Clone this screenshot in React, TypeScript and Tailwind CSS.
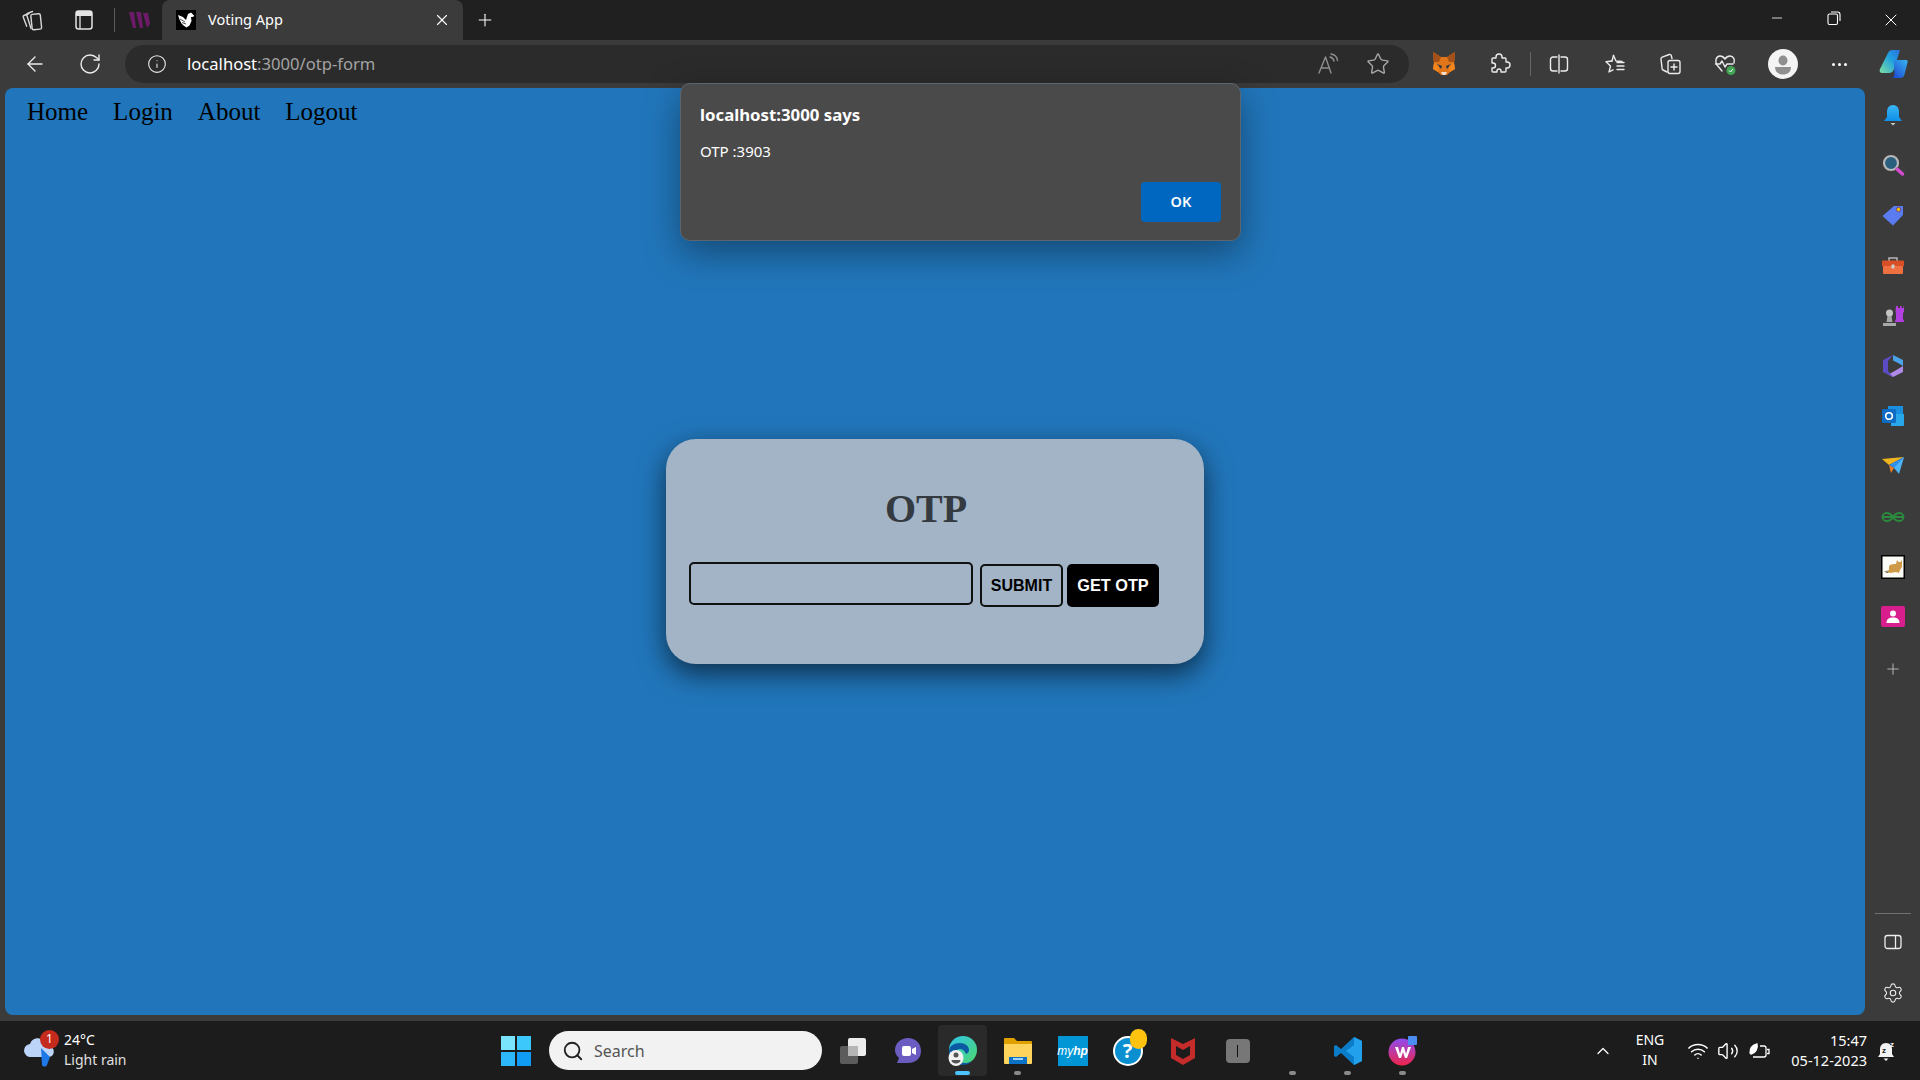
import { useState } from "react"
import { ArrowLeft, RotateCw, Info, Star, X, Plus, Minus, Settings, ChevronUp, Search, Wifi, Volume2 } from "lucide-react"

const UI = "font-['Noto_Sans','Open_Sans',sans-serif]"

const stroke = { fill: "none", stroke: "currentColor", strokeWidth: 1.4, strokeLinecap: "round" as const, strokeLinejoin: "round" as const }

function Collections() {
  return (
    <svg width="24" height="24" viewBox="0 0 24 24" {...stroke} className="text-[#d8d8d8]">
      <path d="M9 5.500 4 7.500c-.7.3-1 1-.7 1.700l3.400 9" />
      <path d="M12.500 3.500 7.500 5.400c-.7.3-1 1-.8 1.600l4.300 13.500" />
      <rect x="11.500" y="6" width="9.500" height="15.500" rx="1.600" transform="rotate(-6 16 14)" />
    </svg>
  )
}

function VerticalTabs() {
  return (
    <svg width="24" height="24" viewBox="0 0 24 24" className="text-[#e4e4e4]">
      <rect x="4" y="3" width="16" height="18" rx="2.500" fill="none" stroke="currentColor" strokeWidth="1.500" />
      <path d="M4 5.500A2.500 2.500 0 0 1 6.500 3h11A2.500 2.500 0 0 1 20 5.500V8H4z" fill="currentColor" />
      <path d="M8 8v13" stroke="currentColor" strokeWidth="1.300" />
    </svg>
  )
}

function WLogo() {
  return (
    <svg width="24" height="24" viewBox="0 0 24 24" fill="#6d1a68">
      <path d="M2 4h5l2 16H6zM9 4h5l2 16h-3zM16 5h5l2 11-3 4z" />
    </svg>
  )
}

function Favicon() {
  return (
    <svg width="20" height="20" viewBox="0 0 20 20" className="shrink-0">
      <rect width="20" height="20" fill="#000" />
      <path d="M2 5 7 7l3 3 2-6 3-1.500L18.500 6l-2 1-1.500 0 .5 4-2 4.500-3 2-3-2-2-2-2-4z" fill="#fff" />
      <path d="M4 9 9 12M6 12.500 10 14" stroke="#000" strokeWidth="0.700" />
    </svg>
  )
}

function ReadAloud() {
  return (
    <svg width="24" height="24" viewBox="0 0 24 24" {...stroke} className="text-[#8e8e8e]">
      <path d="M3 21 9.500 5 15 21M5.500 16h8" />
      <path d="M14 5c2 .5 3.500 2 4 4M15 2c3.500.5 6 3 6.500 6.500" />
    </svg>
  )
}

function Fox() {
  return (
    <svg width="24" height="26" viewBox="0 0 24 26">
      <path d="M1 1 9 6h6l8-5-1 11 1 6-5 3-3 3h-6l-3-3-5-3 1-6z" fill="#e2761b" />
      <path d="M1 1 9 6 7 11 1.500 11zM23 1 15 6l2 5 5.500 0z" fill="#a5521a" />
      <path d="M5 13l5 2-1 3zM19 13l-5 2 1 3z" fill="#233447" />
      <path d="M9 21h6l-1.500 3h-3z" fill="#f2e0cc" />
      <path d="M1 18l5 3 1-6-5-3zM23 18l-5 3-1-6 5-3z" fill="#f6851b" />
    </svg>
  )
}

function PuzzleIcon() {
  return (
    <svg width="24" height="24" viewBox="0 0 24 24" {...stroke} className="text-[#ececec]">
      <path d="M9 6V5a3 3 0 0 1 6 0v1h3a1 1 0 0 1 1 1v3h1a3 3 0 0 1 0 6h-1v3a1 1 0 0 1-1 1h-4v-1a2 2 0 0 0-4 0v1H6a1 1 0 0 1-1-1v-3h1a2.500 2.500 0 0 0 0-5H5V7a1 1 0 0 1 1-1z" />
    </svg>
  )
}

function Split() {
  return (
    <svg width="24" height="24" viewBox="0 0 24 24" {...stroke} className="text-[#ececec]">
      <path d="M10 5H6a2.500 2.500 0 0 0-2.500 2.500v9A2.500 2.500 0 0 0 6 19h4M14 5h4a2.500 2.500 0 0 1 2.500 2.500v9A2.500 2.500 0 0 1 18 19h-4M12 3v18" />
    </svg>
  )
}

function FavStar() {
  return (
    <svg width="24" height="24" viewBox="0 0 24 24" {...stroke} className="text-[#ececec]">
      <path d="M10.500 3.500 13 9l6 .5M9 9 3 9.700l4.500 4.300L6 20l4-2.200" />
      <path d="M10.500 3.500 9 9M14 14h7M14 17.500h7M14 10.500h7" />
    </svg>
  )
}

function AddCollection() {
  return (
    <svg width="24" height="24" viewBox="0 0 24 24" {...stroke} className="text-[#ececec]">
      <path d="M9 20 5 18c-.8-.4-1-1-.9-1.700L3 7c-.1-1 .4-1.600 1.200-1.900l7-2.600c1-.3 1.800.2 2.100 1l.7 3" />
      <rect x="10" y="8.500" width="12" height="13" rx="2" />
      <path d="M16 12v6M13 15h6" />
    </svg>
  )
}

function Heart() {
  return (
    <svg width="24" height="24" viewBox="0 0 24 24">
      <g {...stroke} className="text-[#ececec]">
        <path d="M9 19 4 13C1.500 9.500 3 4 7 4c2.300 0 4 1.500 5 3 1-1.500 2.700-3 5-3 3.500 0 5 3.500 4 7" />
        <path d="M2.500 12H7l2-3 3 6 2-3h6" />
      </g>
      <circle cx="18" cy="18.500" r="4.500" fill="#3fa552" />
      <path d="m16 18.500 1.500 1.500 2.500-3" fill="none" stroke="#fff" strokeWidth="1" />
    </svg>
  )
}

function Profile() {
  return (
    <svg width="30" height="30" viewBox="0 0 30 30">
      <circle cx="15" cy="15" r="15" fill="#f4f4f4" />
      <ellipse cx="15" cy="11.500" rx="4.500" ry="5" fill="#8f8f8f" />
      <path d="M7 18h16c0 5-3.500 7.500-8 7.500S7 23 7 18z" fill="#8f8f8f" />
    </svg>
  )
}

function Copilot() {
  return (
    <svg width="30" height="30" viewBox="0 0 30 30">
      <defs>
        <linearGradient id="cp1" x1="0" y1="1" x2="1" y2="0">
          <stop offset="0" stopColor="#7de0a0" />
          <stop offset="0.6" stopColor="#1e9fe0" />
          <stop offset="1" stopColor="#2c6fe0" />
        </linearGradient>
        <linearGradient id="cp2" x1="0" y1="1" x2="1" y2="0">
          <stop offset="0" stopColor="#1a3fd0" />
          <stop offset="1" stopColor="#38b4f0" />
        </linearGradient>
      </defs>
      <path d="M10 4c1-2 2-3 5-3h7l-6 19c-1 3-3 4-5 4H4c-2 0-3-2-2-4z" fill="url(#cp1)" />
      <path d="M16 11h12c1.500 0 2 1 1.500 2.500l-3 12c-.5 2-2 3.500-4.500 3.500h-9c2 0 3-1.500 3.500-3z" fill="url(#cp2)" />
    </svg>
  )
}

function TitleBar() {
  return (
    <div className={`flex h-10 items-center bg-[#202020] ${UI}`}>
      <div className="flex w-[162px] items-center pl-5">
        <Collections />
        <div className="ml-7">
          <VerticalTabs />
        </div>
        <div className="ml-[18px] h-6 w-px bg-[#5c5c5c]" />
        <div className="ml-3">
          <WLogo />
        </div>
      </div>
      <div className="flex h-10 w-[301px] items-center rounded-t-lg bg-[#3b3b3b] pl-3.5 pr-3">
        <Favicon />
        <span className="mb-px ml-3 text-[14.500px] text-white">Voting App</span>
        <X className="ml-auto size-[18px] text-white" strokeWidth={1.5} />
      </div>
      <Plus className="ml-3 size-5 text-white" strokeWidth={1.3} />
      <div className="ml-auto flex">
        <div className="flex w-[57px] justify-center">
          <Minus className="size-4 text-white" strokeWidth={1.2} />
        </div>
        <div className="flex w-[57px] justify-center">
          <svg width="16" height="16" viewBox="0 0 16 16" fill="none" stroke="#fff" strokeWidth="1.100">
            <rect x="2" y="4" width="9.500" height="10.500" rx="1.500" />
            <path d="M5 2h6.500A2.500 2.500 0 0 1 14 4.500V11" />
          </svg>
        </div>
        <div className="flex w-[58px] justify-center">
          <X className="size-5 text-white" strokeWidth={1.2} />
        </div>
      </div>
    </div>
  )
}

function Toolbar() {
  return (
    <div className={`flex h-12 items-center bg-[#3b3b3b] ${UI}`}>
      <ArrowLeft className="ml-[23px] size-6 text-[#ececec]" strokeWidth={1.4} />
      <RotateCw className="ml-[31px] size-6 text-[#ececec]" strokeWidth={1.4} />
      <div className="ml-[23px] flex h-[38px] w-[1284px] items-center rounded-full bg-[#2b2b2b] pl-[22px] pr-[19px]">
        <Info className="size-5 text-[#ececec]" strokeWidth={1.3} />
        <span className="ml-5 text-[16.600px] text-[#a3a3a3]">
          <span className="text-white">localhost</span>:3000/otp-form
        </span>
        <div className="ml-auto">
          <ReadAloud />
        </div>
        <Star className="ml-[26px] size-6 text-[#a8a8a8]" strokeWidth={1.4} />
      </div>
      <div className="ml-[23px]">
        <Fox />
      </div>
      <div className="ml-[31px]">
        <PuzzleIcon />
      </div>
      <div className="ml-[19px] h-6 w-px bg-[#666]" />
      <div className="ml-4">
        <Split />
      </div>
      <div className="ml-8">
        <FavStar />
      </div>
      <div className="ml-[31px]">
        <AddCollection />
      </div>
      <div className="ml-[31px]">
        <Heart />
      </div>
      <div className="ml-[31px]">
        <Profile />
      </div>
      <div className="ml-[29px] flex w-6 justify-center gap-[3px]">
        <span className="size-[3px] rounded-full bg-white" />
        <span className="size-[3px] rounded-full bg-white" />
        <span className="size-[3px] rounded-full bg-white" />
      </div>
      <div className="ml-[27px]">
        <Copilot />
      </div>
    </div>
  )
}

function AlertDialog() {
  return (
    <div className={`absolute left-[675px] top-[-5px] flex h-[158px] w-[561px] flex-col rounded-[10px] border border-[#5c6670] bg-[#4a4a4a] pl-[19px] pr-[19px] pt-[19px] text-white shadow-[0_12px_36px_rgba(0,0,0,0.38)] ${UI}`}>
      <div className="text-[16.800px] font-bold leading-6">localhost:3000 says</div>
      <div className="mt-3 text-[15px] leading-6">OTP :3903</div>
      <button className="mt-[19px] ml-auto h-10 w-20 rounded bg-[#0067c0] text-[14.500px] font-semibold">OK</button>
    </div>
  )
}

function OtpCard() {
  const [otp, setOtp] = useState("")
  return (
    <div className="h-[225px] w-[538px] rounded-[30px] bg-[#a2b4c6] pl-[23px] pt-[47px] shadow-[0_10px_28px_rgba(0,0,0,0.6)]">
      <div className="w-[474px]">
        <h1 className="text-center font-['Liberation_Serif',serif] text-[40px] font-bold leading-[46px] text-[#343a40]">OTP</h1>
        <div className="mt-[30px] flex items-start font-['Liberation_Sans',sans-serif]">
          <input
            value={otp}
            onChange={(e) => setOtp(e.target.value)}
            className="h-[43px] w-[284px] rounded-[5px] border-2 border-[#111] bg-transparent px-2 outline-none"
          />
          <button className="ml-[7px] mt-[2px] h-[43px] w-[83px] rounded-[5px] border-2 border-[#111] text-[16px] font-bold text-black">SUBMIT</button>
          <button className="ml-1 mt-[2px] h-[43px] w-[92px] rounded-[5px] bg-black text-[16.300px] font-bold text-white">GET OTP</button>
        </div>
      </div>
    </div>
  )
}

function BellIcon() {
  return (
    <svg width="20" height="24" viewBox="0 0 20 24">
      <defs>
        <linearGradient id="bl" x1="0" y1="0" x2="0" y2="1">
          <stop offset="0" stopColor="#3ab6f5" />
          <stop offset="1" stopColor="#0f8fe8" />
        </linearGradient>
      </defs>
      <path d="M10 2c4 0 6 3 6 7v5l3 4H1l3-4V9c0-4 2-7 6-7z" fill="url(#bl)" />
      <path d="M7.500 20h5l-2.500 2.500z" fill="#c9c9c9" />
    </svg>
  )
}

const sideIcons = [
  <BellIcon key="bell" />,
  <svg key="search" width="24" height="24" viewBox="0 0 24 24">
    <circle cx="10" cy="10" r="7" fill="#2b5f80" stroke="#b8b8b8" strokeWidth="2.200" />
    <path d="m16 16 5.500 5" stroke="#d44bd0" strokeWidth="3.500" strokeLinecap="round" />
  </svg>,
  <svg key="tag" width="24" height="24" viewBox="0 0 24 24">
    <path d="M1.500 13 13 3h9v9L12 22.500z" fill="#5a7cf0" />
    <circle cx="17.500" cy="6.500" r="2.200" fill="#f2c200" stroke="#5a2a90" strokeWidth="0.800" />
  </svg>,
  <svg key="toolbox" width="24" height="24" viewBox="0 0 24 24">
    <path d="M8 7V4h8v3" fill="none" stroke="#b5b5b5" strokeWidth="1.500" />
    <rect x="1" y="6.500" width="22" height="6" rx="1" fill="#d84f27" />
    <rect x="2" y="12" width="20" height="8" rx="1" fill="#ee6f3f" />
    <rect x="10.500" y="10.500" width="3" height="4" rx="0.700" fill="#cfcfcf" />
  </svg>,
  <svg key="chess" width="24" height="24" viewBox="0 0 24 24">
    <circle cx="8.500" cy="9" r="3.500" fill="#c4c4c4" />
    <path d="M6.500 12h4l1 6h-6zM2 19h13v3H2z" fill="#a8a8a8" />
    <path d="M15 2h2v2h2V2h1.500v2h2V2h.5v6l-1 1v6l1 2v1H14v-1l1-2V9l-.5-1z" fill="#b23fe0" />
  </svg>,
  <svg key="m365" width="24" height="24" viewBox="0 0 24 24">
    <path d="M12 1 22 6v6l-5-3-5-2.500z" fill="#4aa3e8" />
    <path d="M22 12v6l-10 5-5-2.500 5-2.500 5-3z" fill="#b08ae8" />
    <path d="M2 6l10-5-5 6v10l5 6-10-5z" fill="#5b4cc4" />
  </svg>,
  <svg key="outlook" width="24" height="24" viewBox="0 0 24 24">
    <rect x="7" y="2" width="15" height="8" fill="#1a8fe0" />
    <path d="M10 10h13v11a1 1 0 0 1-1 1H10z" fill="#28a8ea" />
    <rect x="1" y="5" width="14" height="14" rx="1.500" fill="#0f6cc4" />
    <circle cx="8" cy="12" r="3.300" fill="none" stroke="#fff" strokeWidth="1.600" />
  </svg>,
  <svg key="send" width="24" height="24" viewBox="0 0 24 24">
    <path d="M1 5 23 3 8 11z" fill="#f0b41e" />
    <path d="M23 3 8 11l10 6z" fill="#2f8fec" />
    <path d="M8 11l2 8 3-5z" fill="#f07a1e" />
    <path d="M23 3 18 20l-5-6z" fill="#4fb4f5" />
  </svg>,
  <svg key="gfg" width="24" height="24" viewBox="0 0 24 24" fill="none" stroke="#2a8a3e" strokeWidth="1.800">
    <path d="M12 12c-2-3-4-4-6.500-4C3 8 1.500 10 1.500 12S3 16 5.500 16c2.500 0 5-1 6.500-4 1.500 3 4 4 6.500 4s4-2 4-4-1.500-4-4-4C16 8 14 9 12 12zM2 12h20" />
  </svg>,
  <svg key="tomcat" width="24" height="24" viewBox="0 0 24 24">
    <rect x="0.750" y="0.750" width="22.500" height="22.500" fill="#fbfbf5" stroke="#000" strokeWidth="1.500" />
    <path d="M8 11c2-2 5-2 7-2l1-4 1.500 2h2L21 5v7l-2 3-1 3-3-1-6 1-4-2 3-1z" fill="#cf9a48" />
    <path d="M3 16l5 1-2 1z" fill="#444" />
  </svg>,
  <svg key="contact" width="24" height="24" viewBox="0 0 24 24">
    <rect x="0" y="1" width="24" height="21" rx="2" fill="#d81e8c" />
    <circle cx="12" cy="8.500" r="3" fill="#fff" />
    <path d="M5.500 18c0-4 2.500-5.500 6.500-5.500s6.500 1.500 6.500 5.500z" fill="#fff" />
  </svg>,
]

function Sidebar() {
  return (
    <div className="flex w-[55px] flex-col items-center pt-[2px]">
      {sideIcons.map((icon, i) => (
        <div key={i} className="flex h-[50.200px] w-full items-center justify-center">
          {icon}
        </div>
      ))}
      <Plus className="mt-[18px] size-[18px] text-[#b0b0b0]" strokeWidth={1.4} />
      <div className="mt-[235px] h-px w-9 bg-[#707070]" />
      <svg width="20" height="20" viewBox="0 0 20 20" fill="none" stroke="#ececec" strokeWidth="1.300" className="mt-[18px]">
        <rect x="2" y="3.500" width="16" height="13" rx="2.500" />
        <path d="M12.500 3.500v13" />
      </svg>
      <Settings className="mt-[30px] size-[22px] text-[#ececec]" strokeWidth={1.2} />
    </div>
  )
}

function WeatherIcon() {
  return (
    <div className="relative h-9 w-10">
      <svg width="36" height="36" viewBox="0 0 36 36">
        <path d="M9 24a6.500 6.500 0 0 1-1-13c1.500-5 7-7 11-5 5-.5 10 2 10 8 4 1 4 10-2 10z" fill="#bcd4f8" />
        <path d="M19 15l9 9-3 8c-1 2-4 2-5 0z" fill="#1e78e8" />
      </svg>
      <div className="absolute left-[18px] top-[-3px] flex size-[19px] items-center justify-center rounded-full bg-[#c42b1c] text-[12px] text-white">1</div>
    </div>
  )
}

const taskbarApps = [
  {
    icon: (
      <svg width="28" height="28" viewBox="0 0 28 28">
        <rect x="1" y="9" width="18" height="18" rx="2" fill="#5c5c5c" />
        <rect x="9" y="1" width="18" height="18" rx="2" fill="#ececec" />
        <rect x="9" y="9" width="10" height="10" fill="#b5b5b5" />
      </svg>
    ),
  },
  {
    icon: (
      <svg width="28" height="28" viewBox="0 0 28 28">
        <path d="M14 1c7 0 13 5 13 13s-6 12-13 12H3l2-5C2 18 1 16 1 13 1 6 7 1 14 1z" fill="#6a5cc0" />
        <rect x="8" y="9" width="9" height="10" rx="2" fill="#fff" />
        <path d="m18 12 4-2v8l-4-2z" fill="#fff" />
      </svg>
    ),
  },
  {
    active: true,
    icon: (
      <svg width="32" height="32" viewBox="0 0 32 32">
        <defs>
          <linearGradient id="edg" x1="0" y1="0" x2="1" y2="1">
            <stop offset="0" stopColor="#2fc4e8" />
            <stop offset="1" stopColor="#4dd86e" />
          </linearGradient>
        </defs>
        <circle cx="16" cy="15" r="14" fill="url(#edg)" />
        <path d="M2 16c0-5 5-8 11-8 5 0 9 3 9 7 0 2-1 3-3 4-2-5-6-6-9-4-3 2-3 9 3 12 4 2 9 1 12-1-3 3-6 4-10 4C8 30 2 24 2 16z" fill="#0c59a4" />
        <ellipse cx="9" cy="23" rx="7.500" ry="8" fill="#f2f2f2" />
        <circle cx="9" cy="20" r="2.500" fill="#555" />
        <path d="M4.500 25h9c0 2-2 3.500-4.500 3.500S4.500 27 4.500 25z" fill="#555" />
      </svg>
    ),
  },
  {
    dot: true,
    icon: (
      <svg width="30" height="30" viewBox="0 0 30 30">
        <path d="M1 3a1 1 0 0 1 1-1h9l3 3h14a1 1 0 0 1 1 1v5H1z" fill="#e0a100" />
        <path d="M1 8h28v19a1 1 0 0 1-1 1H2a1 1 0 0 1-1-1z" fill="#ffd45c" />
        <path d="M6 21h18v7H6z" fill="#0c72c8" />
        <rect x="10" y="22" width="10" height="2" fill="#9fd4f5" />
      </svg>
    ),
  },
  {
    icon: (
      <div className="flex h-[30px] w-[30px] items-center justify-center bg-[#0096d6] font-['Liberation_Sans',sans-serif] text-[12px] italic text-white">
        my<span className="font-bold">hp</span>
      </div>
    ),
  },
  {
    icon: (
      <div className="relative flex size-[30px] items-center justify-center rounded-full border-2 border-white bg-[#0a8fd0] text-[20px] font-bold text-white">
        ?
        <div className="absolute right-[-6px] top-[-9px] h-5 w-[17px] rounded-full bg-[#ffc30f]" />
      </div>
    ),
  },
  {
    icon: (
      <svg width="28" height="30" viewBox="0 0 28 30">
        <path d="M2 2 14 8 26 2v20l-12 7-12-7z" fill="#c42b2b" />
        <path d="M7 10v9l7 4 7-4v-9l-7 4z" fill="#1c1c1c" />
      </svg>
    ),
  },
  {
    icon: (
      <div className="flex h-6 w-6 items-center justify-center rounded-sm bg-[#777]">
        <div className="h-3 w-px bg-[#111]" />
      </div>
    ),
  },
  { dot: true, icon: null },
  {
    dot: true,
    icon: (
      <svg width="30" height="30" viewBox="0 0 30 30">
        <path d="M21 1 29 5v20l-8 4-13-12-5 4-2-1V10l2-1 5 4z" fill="#0a7cc8" />
        <path d="M21 1 29 5v20l-8 4zM21 9l-8 6 8 6z" fill="#22a0ec" />
      </svg>
    ),
  },
  {
    dot: true,
    icon: (
      <svg width="30" height="32" viewBox="0 0 30 32">
        <defs>
          <linearGradient id="wp" x1="0" y1="0" x2="0" y2="1">
            <stop offset="0" stopColor="#8e4cf0" />
            <stop offset="1" stopColor="#f0244c" />
          </linearGradient>
        </defs>
        <circle cx="14" cy="17" r="13.500" fill="url(#wp)" />
        <path d="M7 12h3l2 7 2-7h2l2 7 2-7h3l-4 11h-2l-2-6-2 6h-2z" fill="#fff" />
        <rect x="20" y="1" width="9" height="9" rx="1" fill="#4a8cf0" />
      </svg>
    ),
  },
]

function Taskbar() {
  return (
    <div className={`flex h-[59px] items-center bg-[#1c1c1c] text-white ${UI}`}>
      <div className="flex w-[501px] items-center pl-[22px]">
        <WeatherIcon />
        <div className="mb-[2px] ml-[2px] text-[14px] leading-5">
          <div>24°C</div>
          <div className="text-[#e0e0e0]">Light rain</div>
        </div>
      </div>
      <div className="grid size-[30px] grid-cols-2 gap-[2px]">
        <div className="bg-[#7ae4fd]" />
        <div className="bg-[#3cc8fb]" />
        <div className="bg-[#2cb8fb]" />
        <div className="bg-[#109bf5]" />
      </div>
      <div className="ml-[18px] flex h-[39px] w-[273px] items-center rounded-full bg-[#f2f2f2] pl-[13px] text-[16px] text-[#555]">
        <Search className="size-[22px] text-[#222]" strokeWidth={2} />
        <span className="ml-[10px]">Search</span>
      </div>
      <div className="ml-[3px] flex h-full">
        {taskbarApps.map((app, i) => (
          <div key={i} className="relative flex h-full w-[55px] items-center justify-center">
            {app.active && <div className="absolute inset-x-[3px] inset-y-1 rounded bg-[#2a2a2a]" />}
            <div className="relative flex">{app.icon}</div>
            {app.dot && <div className="absolute bottom-[5px] h-1 w-[7px] rounded-full bg-[#8a8a8a]" />}
            {app.active && <div className="absolute bottom-[5px] h-1 w-[15px] rounded-full bg-[#4cc2ff]" />}
          </div>
        ))}
      </div>
      <ChevronUp className="ml-[163px] size-5 shrink-0 text-white" strokeWidth={1.5} />
      <div className="mb-[2px] ml-3 w-[50px] text-center text-[14px] leading-5">
        ENG
        <br />
        IN
      </div>
      <Wifi className="ml-3 size-[22px] shrink-0" strokeWidth={1.6} />
      <Volume2 className="ml-2 size-[22px] shrink-0" strokeWidth={1.5} />
      <svg width="22" height="22" viewBox="0 0 22 22" fill="none" stroke="#fff" strokeWidth="1.300" className="ml-[9px] shrink-0">
        <path d="M5 17h11a2 2 0 0 0 2-2V8a2 2 0 0 0-2-2h-4M19 9.500h2v4h-2" />
        <path d="M2 13c0-5 3-8 7-9 1 4-1 9-6 10z" fill="#fff" />
      </svg>
      <div className="mb-[2px] ml-[5px] w-[92px] text-right text-[14.500px] leading-5">
        15:47
        <br />
        05-12-2023
      </div>
      <svg width="20" height="22" viewBox="0 0 20 22" className="ml-[10px] shrink-0">
        <path d="M9 3c-4 0-6 3-6 6v5l-2 3h16l-2-3V9c0-3-2-6-6-6z" fill="#f2f2f2" />
        <path d="M6.500 18.500h5L9 21z" fill="#f2f2f2" />
        <text x="5" y="13" fontSize="8" fontWeight="700" fill="#1c1c1c" fontFamily="Liberation Sans">z</text>
        <text x="13" y="7" fontSize="8" fontWeight="700" fill="#f2f2f2" fontFamily="Liberation Sans">z</text>
      </svg>
    </div>
  )
}

export default function App() {
  return (
    <div className="flex h-screen w-screen flex-col overflow-hidden bg-[#3b3b3b]">
      <TitleBar />
      <Toolbar />
      <div className="flex min-h-0 flex-1">
        <div className="relative mb-[6px] ml-[5px] flex w-[1860px] items-center justify-center rounded-lg bg-[#2176bb]">
          {/* Nav */}
          <nav className="absolute left-[22px] top-[7px] flex gap-[25px] font-['Liberation_Serif',serif] text-[25px] leading-[34px] text-black">
            <a>Home</a>
            <a>Login</a>
            <a>About</a>
            <a>Logout</a>
          </nav>
          <OtpCard />
          <AlertDialog />
        </div>
        <Sidebar />
      </div>
      <Taskbar />
    </div>
  )
}
